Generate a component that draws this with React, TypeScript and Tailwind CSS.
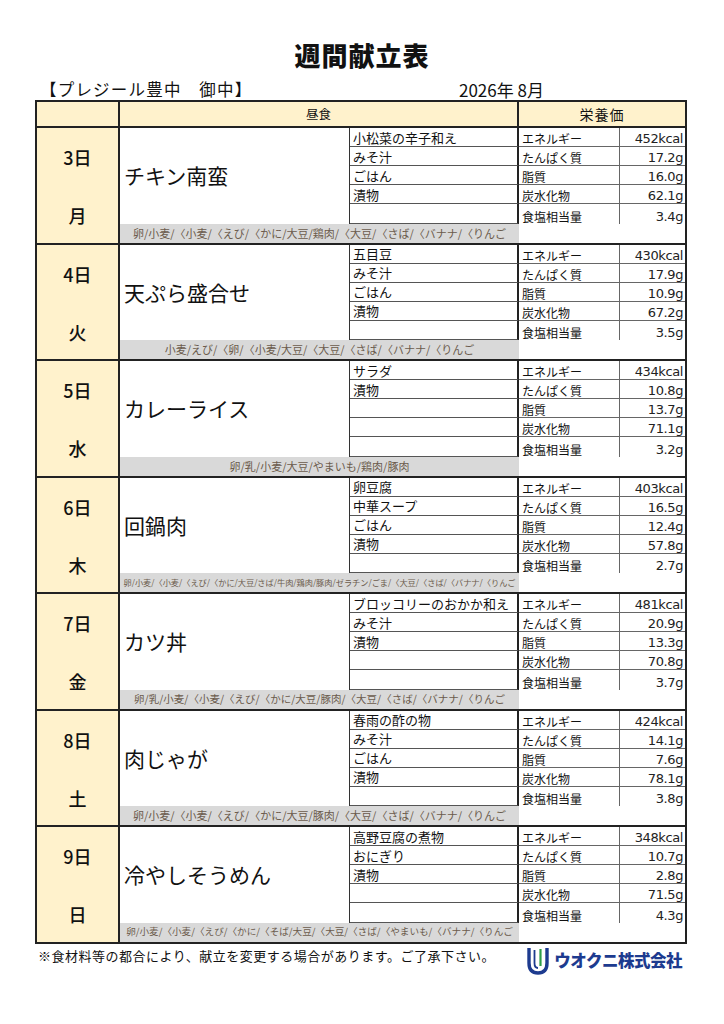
import React from "react";

type Day = {
  date: string;
  weekday: string;
  main: string;
  sides: string[];
  nutrition: string[];
  allergens: string;
  allergenSize: string;
};

const labels = ["エネルギー", "たんぱく質", "脂質", "炭水化物", "食塩相当量"];

const days: Day[] = [
  {
    date: "3日",
    weekday: "月",
    main: "チキン南蛮",
    sides: ["小松菜の辛子和え", "みそ汁", "ごはん", "漬物", ""],
    nutrition: ["452kcal", "17.2g", "16.0g", "62.1g", "3.4g"],
    allergens: "卵/小麦/〈小麦/〈えび/〈かに/大豆/鶏肉/〈大豆/〈さば/〈バナナ/〈りんご",
    allergenSize: "text-[11px]",
  },
  {
    date: "4日",
    weekday: "火",
    main: "天ぷら盛合せ",
    sides: ["五目豆", "みそ汁", "ごはん", "漬物", ""],
    nutrition: ["430kcal", "17.9g", "10.9g", "67.2g", "3.5g"],
    allergens: "小麦/えび/〈卵/〈小麦/大豆/〈大豆/〈さば/〈バナナ/〈りんご",
    allergenSize: "text-[11px]",
  },
  {
    date: "5日",
    weekday: "水",
    main: "カレーライス",
    sides: ["サラダ", "漬物", "", "", ""],
    nutrition: ["434kcal", "10.8g", "13.7g", "71.1g", "3.2g"],
    allergens: "卵/乳/小麦/大豆/やまいも/鶏肉/豚肉",
    allergenSize: "text-[11px]",
  },
  {
    date: "6日",
    weekday: "木",
    main: "回鍋肉",
    sides: ["卵豆腐", "中華スープ", "ごはん", "漬物", ""],
    nutrition: ["403kcal", "16.5g", "12.4g", "57.8g", "2.7g"],
    allergens:
      "卵/小麦/〈小麦/〈えび/〈かに/大豆/さば/牛肉/鶏肉/豚肉/ゼラチン/ごま/〈大豆/〈さば/〈バナナ/〈りんご",
    allergenSize: "text-[8.2px]",
  },
  {
    date: "7日",
    weekday: "金",
    main: "カツ丼",
    sides: ["ブロッコリーのおかか和え", "みそ汁", "漬物", "", ""],
    nutrition: ["481kcal", "20.9g", "13.3g", "70.8g", "3.7g"],
    allergens: "卵/乳/小麦/〈小麦/〈えび/〈かに/大豆/豚肉/〈大豆/〈さば/〈バナナ/〈りんご",
    allergenSize: "text-[10.5px]",
  },
  {
    date: "8日",
    weekday: "土",
    main: "肉じゃが",
    sides: ["春雨の酢の物", "みそ汁", "ごはん", "漬物", ""],
    nutrition: ["424kcal", "14.1g", "7.6g", "78.1g", "3.8g"],
    allergens: "卵/小麦/〈小麦/〈えび/〈かに/大豆/豚肉/〈大豆/〈さば/〈バナナ/〈りんご",
    allergenSize: "text-[11px]",
  },
  {
    date: "9日",
    weekday: "日",
    main: "冷やしそうめん",
    sides: ["高野豆腐の煮物", "おにぎり", "漬物", "", ""],
    nutrition: ["348kcal", "10.7g", "2.8g", "71.5g", "4.3g"],
    allergens:
      "卵/小麦/〈小麦/〈えび/〈かに/〈そば/大豆/〈大豆/〈さば/〈やまいも/〈バナナ/〈りんご",
    allergenSize: "text-[9.6px]",
  },
];

function LogoMark() {
  return (
    <svg width="24" height="30" viewBox="0 0 24 30" aria-hidden="true">
      <path d="M3 2 V17 Q3 27 12 27 Q21 27 21 17 V2" fill="none" stroke="#1d3b8f" strokeWidth="3.4" />
      <path d="M8.5 4 V17 Q8.5 22 12 22" fill="none" stroke="#1d3b8f" strokeWidth="1.8" />
      <path d="M14.5 3 V20" fill="none" stroke="#2e9e48" strokeWidth="2.2" />
    </svg>
  );
}

function DayBlock({ day, last }: { day: Day; last: boolean }) {
  return (
    <div className={last ? "" : "border-b-2 border-[#222]"}>
      <div className="grid grid-cols-[83px_230px_169px_101px_65px] grid-rows-[19px_19px_19px_19px_19.5px_19px]">
        <div className="row-span-6 flex flex-col items-center border-r-2 border-[#222] bg-[#fff2cc] pt-[19px] text-[18px] font-medium leading-[20px]">
          <span>{day.date}</span>
          <span className="mt-[38px]">{day.weekday}</span>
        </div>
        <div className="row-span-5 flex items-center border-r border-[#333] pl-[4px] text-[21px] leading-none">
          {day.main}
        </div>
        {day.sides.map((side, i) => (
          <React.Fragment key={i}>
            <div className="col-start-3 flex items-center border-b border-r-2 border-b-[#555] border-r-[#222] pl-[3px] text-[13px] leading-none whitespace-nowrap">
              {side}
            </div>
            <div
              className={
                "flex items-end border-r border-[#666] pb-[1px] pl-[3px] text-[12px] leading-none " +
                (i < 4 ? "border-b" : "")
              }
            >
              {labels[i]}
            </div>
            <div
              className={
                "flex items-end justify-end border-[#666] pb-[1px] pr-[2px] font-['DejaVu_Sans'] text-[13px] leading-none tracking-[-0.4px] text-[#222] " +
                (i < 4 ? "border-b" : "")
              }
            >
              {day.nutrition[i]}
            </div>
          </React.Fragment>
        ))}
        <div
          className={
            "col-span-2 col-start-2 flex items-center justify-center bg-[#d9d9d9] leading-none whitespace-nowrap text-[#6b5b4c] " +
            day.allergenSize
          }
        >
          {day.allergens}
        </div>
        <div className="col-span-2 col-start-4" />
      </div>
    </div>
  );
}

export default function App() {
  return (
    <div className="min-h-[1024px] w-[724px] bg-white font-['Noto_Sans_CJK_JP',sans-serif] text-[#111]">
      <div className="pt-[38px]">
        <h1 className="h-[34px] text-center text-[26px] font-black leading-[34px] tracking-[1px]">
          週間献立表
        </h1>
        <div className="mt-[6px] flex h-[22px] items-center text-[16.5px] leading-none">
          <span className="w-[459px] pl-[40px] tracking-[1.2px]">【プレジール豊中　御中】</span>
          <span className="text-[17px]">2026年 8月</span>
        </div>
      </div>

      <div className="ml-[35px] w-[652px] border-2 border-[#222]">
        <div className="grid h-[26px] grid-cols-[83px_399px_166px] border-b-2 border-[#222] bg-[#fff2cc]">
          <div className="border-r-2 border-[#222]" />
          <div className="flex items-center justify-center border-r-2 border-[#222] text-[12.5px]">
            昼食
          </div>
          <div className="flex items-center justify-center text-[14px] tracking-[1px]">栄養価</div>
        </div>
        {days.map((day, i) => (
          <DayBlock key={day.date} day={day} last={i === days.length - 1} />
        ))}
      </div>

      <div className="flex items-start">
        <p className="mt-[4px] pl-[38px] text-[13px] leading-[16px] tracking-[0.5px]">
          ※食材料等の都合により、献立を変更する場合があります。ご了承下さい。
        </p>
        <div className="ml-auto mr-[42px] mt-[2px] flex items-center gap-[4px]">
          <LogoMark />
          <span className="text-[16.5px] font-black leading-none tracking-[-0.5px] text-[#1d3b8f]">
            ウオクニ株式会社
          </span>
        </div>
      </div>
    </div>
  );
}
